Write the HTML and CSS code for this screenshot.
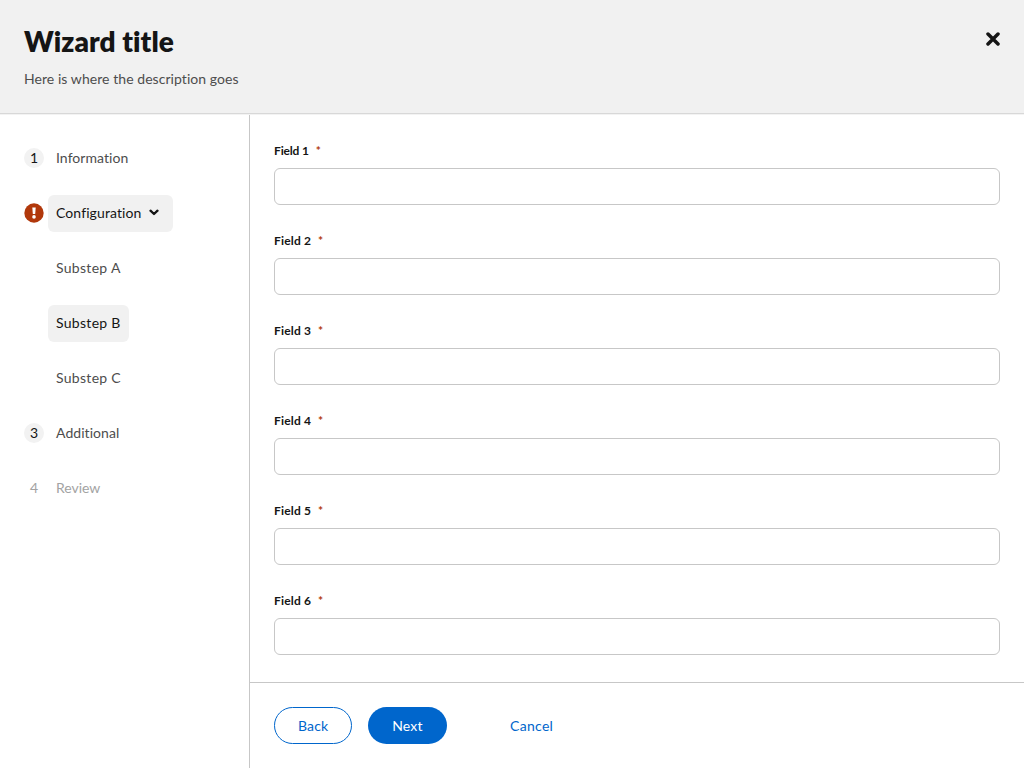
FILE: index.html
```html
<!DOCTYPE html>
<html lang="en">
<head>
<meta charset="utf-8">
<title>Wizard title</title>
<link rel="stylesheet" href="styles.css">
</head>
<body>
<div class="wizard">
  <header class="wizard-header">
    <div class="heading">
      <h1 class="title">Wizard title</h1>
      <p class="description">Here is where the description goes</p>
    </div>
    <button class="close" aria-label="Close">
      <svg width="14" height="14" viewBox="0 0 14 14"><path d="M2 2 12 12M12 2 2 12" fill="none" stroke="currentColor" stroke-width="3.5" stroke-linecap="round"/></svg>
    </button>
  </header>
  <div class="wizard-body">
    <nav class="nav">
      <div class="step"><span class="number">1</span><a class="link t-information">Information</a></div>
      <div class="step">
        <svg class="alert" width="20" height="20" viewBox="0 0 20 20"><circle cx="10" cy="10" r="9.7" fill="#b1380b"/><path d="M8.3 4.6h3.4l-.5 6.4H8.8z" fill="#fff"/><circle cx="10" cy="13.9" r="1.8" fill="#fff"/></svg>
        <a class="link current toggle"><span class="t-configuration">Configuration</span><svg class="chevron" width="10" height="7" viewBox="0 0 10 7"><path d="M1.5 1.7 5 5 8.5 1.7" fill="none" stroke="currentColor" stroke-width="2.3" stroke-linecap="round" stroke-linejoin="round"/></svg></a>
      </div>
      <div class="step sub"><a class="link t-substep">Substep A</a></div>
      <div class="step sub"><a class="link current t-substep">Substep B</a></div>
      <div class="step sub"><a class="link t-substep">Substep C</a></div>
      <div class="step"><span class="number">3</span><a class="link t-additional">Additional</a></div>
      <div class="step disabled"><span class="number">4</span><a class="link t-review">Review</a></div>
    </nav>
    <div class="content">
      <form class="form">
        <div class="field"><label class="label narrow" for="f1">Field 1<span class="required">*</span></label><input class="input" id="f1"></div>
        <div class="field"><label class="label" for="f2">Field 2<span class="required">*</span></label><input class="input" id="f2"></div>
        <div class="field"><label class="label" for="f3">Field 3<span class="required">*</span></label><input class="input" id="f3"></div>
        <div class="field"><label class="label" for="f4">Field 4<span class="required">*</span></label><input class="input" id="f4"></div>
        <div class="field"><label class="label" for="f5">Field 5<span class="required">*</span></label><input class="input" id="f5"></div>
        <div class="field"><label class="label" for="f6">Field 6<span class="required">*</span></label><input class="input" id="f6"></div>
      </form>
      <footer class="footer">
        <button class="button secondary">Back</button>
        <button class="button primary">Next</button>
        <button class="button text">Cancel</button>
      </footer>
    </div>
  </div>
</div>
</body>
</html>
```
FILE: styles.css
```css
* { box-sizing: border-box; }
body { margin: 0; font: 14px/21px Lato, "Open Sans", sans-serif; font-variant-ligatures: none; color: #151515; background: #fff; }
button, input { font: inherit; }
.wizard { display: flex; flex-direction: column; height: 768px; overflow: hidden; }
.wizard-header { display: flex; justify-content: space-between; height: 115px; flex: none; padding: 23px 24px; background: #f1f1f1; border-bottom: 1px solid #f3f3f3; box-shadow: inset 0 -1px #d8d8d8; }
.title { margin: 0; font: 800 28px/36px Lato, sans-serif; letter-spacing: .08px; }
.description { margin: 9px 0 0; color: #4d4d4d; letter-spacing: .06px; }
.close { display: flex; width: 14px; height: 14px; margin-top: 8.5px; padding: 0; border: 0; background: none; color: #151515; }
.wizard-body { display: flex; flex: 1; min-height: 0; }
.nav { display: flex; flex-direction: column; gap: 18px; width: 250px; flex: none; padding: 24.6px 24px 0; border-right: 1px solid #c7c7c7; }
.step { display: flex; align-items: center; gap: 4px; height: 37px; }
.sub { padding-left: 24px; }
.number { width: 20px; height: 20px; flex: none; border-radius: 50%; background: #f2f2f2; line-height: 19px; text-align: center; }
.alert { flex: none; }
.link { display: flex; align-items: center; height: 37px; padding: 0 8px 1px; border-radius: 6px; color: #4d4d4d; white-space: nowrap; }
.current { background: #f1f1f1; color: #151515; }
.toggle { width: 125px; justify-content: space-between; padding-right: 14px; }
.disabled .number { background: none; color: #a3a3a3; }
.disabled .link { color: #a3a3a3; }
.t-information { letter-spacing: .06px; }
.t-configuration { letter-spacing: .1px; }
.t-substep { letter-spacing: .3px; }
.t-additional { letter-spacing: .06px; }
.t-review { letter-spacing: -.05px; }
.content { display: flex; flex: 1; flex-direction: column; min-width: 0; }
.form { display: flex; flex: 1; flex-direction: column; gap: 26px; min-height: 0; padding: 26px 24px 0; overflow: hidden; }
.field { display: flex; flex: none; flex-direction: column; height: 64px; }
.label { height: 27px; font-size: 12px; line-height: 20px; font-weight: 700; letter-spacing: .17px; }
.narrow { letter-spacing: -.15px; }
.required { margin-left: 7px; color: #b1380b; }
.input { width: 100%; height: 37px; padding: 0 12px; border: 1px solid #c7c7c7; border-radius: 6px; background: #fff; }
.footer { display: flex; gap: 16px; height: 86px; flex: none; padding: 24px; border-top: 1px solid #c7c7c7; }
.button { width: 78.3px; height: 37px; padding: 0; border: 1px solid transparent; border-radius: 19px; background: none; color: #06c; letter-spacing: .15px; }
.secondary { border-color: #06c; }
.primary { background: #06c; color: #fff; }
.text { width: 90px; margin-left: 24px; letter-spacing: .3px; }
```
